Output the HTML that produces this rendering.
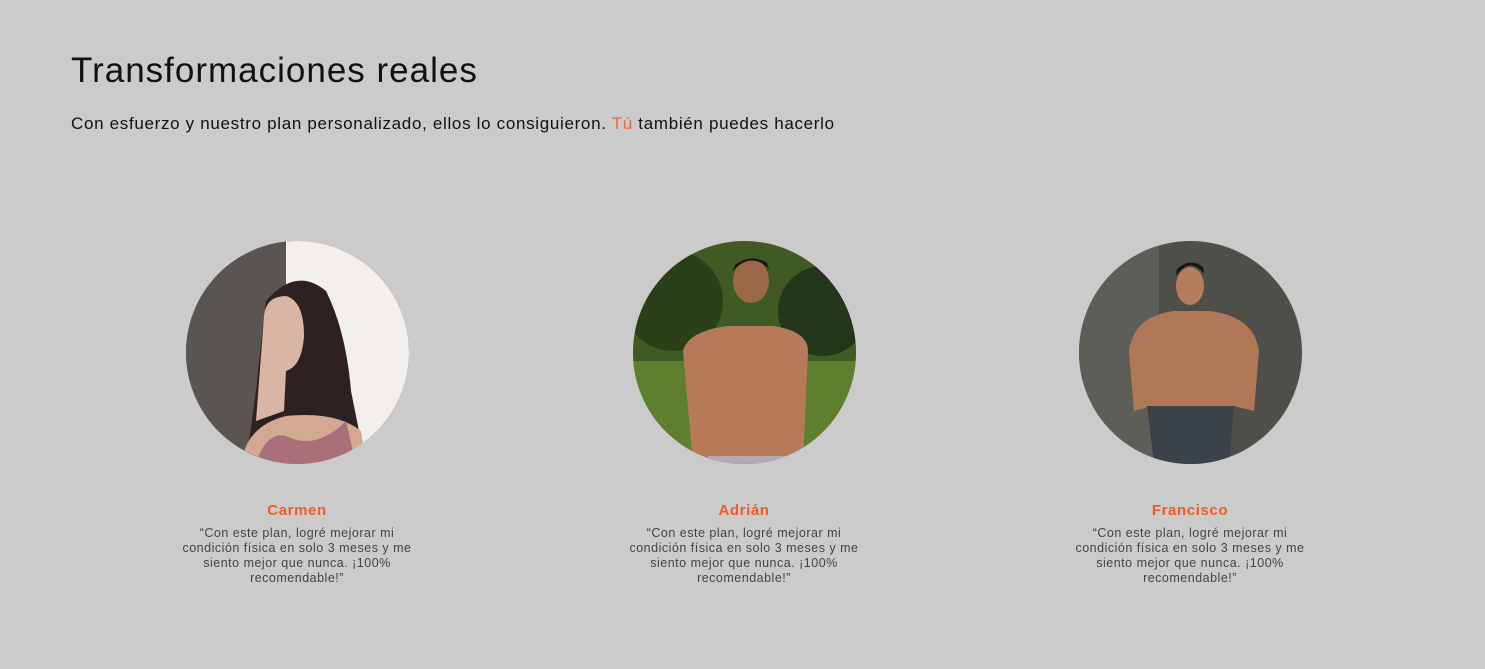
<!DOCTYPE html>
<html><head><meta charset="utf-8"><style>
body{margin:0;width:1485px;height:669px;background:#cbcbcb;font-family:"Liberation Sans",sans-serif;overflow:hidden;position:relative}
h1{position:absolute;left:71px;top:51px;margin:0;font-weight:400;font-size:35px;color:#111;letter-spacing:1px}
.sub{position:absolute;left:71px;top:114px;margin:0;font-size:17px;color:#111;letter-spacing:0.68px}
.sub span{color:#f26a3b}
.card{position:absolute;top:241px;width:300px;text-align:center}
.card svg{display:block;margin:0 auto}
.name{margin-top:38px;color:#f15a24;font-weight:700;font-size:15px;letter-spacing:0.6px}
.q{margin:7px auto 0;width:236px;font-size:12.5px;line-height:15px;color:#444;letter-spacing:0.5px}
</style></head><body>
<h1>Transformaciones reales</h1>
<p class="sub">Con esfuerzo y nuestro plan personalizado, ellos lo consiguieron. <span>Tú</span> también puedes hacerlo</p>

<div class="card" style="left:147px">
<svg width="223" height="223" viewBox="0 0 223 223"><defs><clipPath id="c1"><circle cx="111.5" cy="111.5" r="111.5"/></clipPath></defs>
<g clip-path="url(#c1)"><rect width="223" height="223" fill="#4a4645"/><rect x="100" width="123" height="223" fill="#f3efec"/><rect x="0" width="100" height="223" fill="#5a5553"/>
<path d="M80 60 Q110 25 140 50 Q160 90 165 150 L175 200 L60 223 L70 150 Q75 100 80 60Z" fill="#2e2220"/>
<path d="M78 75 Q80 55 100 55 Q118 60 118 95 Q116 125 100 130 L98 170 L70 180 Z" fill="#d9b5a3"/>
<path d="M55 223 Q60 185 100 175 Q150 170 175 190 L180 223Z" fill="#d5a894"/>
<path d="M70 223 Q80 190 100 195 Q130 210 160 180 L170 223Z" fill="#a9707a"/></g></svg>
<div class="name">Carmen</div>
<div class="q">“Con este plan, logré mejorar mi condición física en solo 3 meses y me siento mejor que nunca. ¡100% recomendable!”</div></div>

<div class="card" style="left:594px">
<svg width="223" height="223" viewBox="0 0 223 223"><defs><clipPath id="c2"><circle cx="111.5" cy="111.5" r="111.5"/></clipPath></defs>
<g clip-path="url(#c2)"><rect width="223" height="223" fill="#3f5a22"/><rect y="120" width="223" height="103" fill="#5e7f2e"/><circle cx="40" cy="60" r="50" fill="#2b3f18"/><circle cx="190" cy="70" r="45" fill="#24361a"/>
<ellipse cx="118" cy="40" rx="18" ry="22" fill="#9b6848"/><path d="M100 30 Q118 10 136 28 L134 22 Q118 12 102 24Z" fill="#1a1410"/>
<path d="M60 223 L50 110 Q55 90 95 85 L140 85 Q175 90 175 110 L170 223Z" fill="#b77a58"/>
<path d="M75 215 L165 215 L165 223 L75 223Z" fill="#b7a9b3"/></g></svg>
<div class="name">Adrián</div>
<div class="q">“Con este plan, logré mejorar mi condición física en solo 3 meses y me siento mejor que nunca. ¡100% recomendable!”</div></div>

<div class="card" style="left:1040px">
<svg width="223" height="223" viewBox="0 0 223 223"><defs><clipPath id="c3"><circle cx="111.5" cy="111.5" r="111.5"/></clipPath></defs>
<g clip-path="url(#c3)"><rect width="223" height="223" fill="#4e4f49"/><rect x="0" y="0" width="80" height="223" fill="#5d5e57"/>
<ellipse cx="111" cy="45" rx="14" ry="19" fill="#b57c5e"/><path d="M97 35 Q111 15 125 33 L124 26 Q111 16 98 28Z" fill="#1a1410"/>
<path d="M55 170 L50 110 Q55 75 95 70 L130 70 Q175 75 180 110 L175 170 L155 165 L150 165 L72 165 Z" fill="#b17857"/>
<path d="M68 165 L155 165 L150 223 L75 223Z" fill="#3c4249"/></g></svg>
<div class="name">Francisco</div>
<div class="q">“Con este plan, logré mejorar mi condición física en solo 3 meses y me siento mejor que nunca. ¡100% recomendable!”</div></div>
</body></html>
